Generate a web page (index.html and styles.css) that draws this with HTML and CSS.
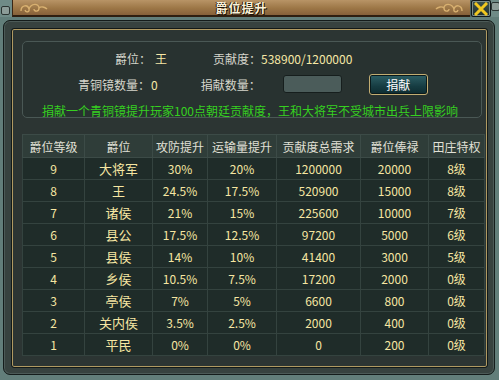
FILE: index.html
```html
<!doctype html>
<html lang="zh">
<head>
    <meta charset="UTF-8">
    <title>爵位提升</title>
    <link rel="stylesheet" href="styles.css">
</head>
<body>
<div class="window">
    <div class="titlebar">
        <div class="cap"><span class="knob"></span></div>
        <div class="wood">
            <svg class="cloud" width="30" height="14" viewBox="0 0 30 14">
                <path d="M2 10 C2 4 9 3 10 8 C11 11 7 12 6 9 M10 8 C12 2 20 2 20 7 C20 11 15 11 15 8 M20 7 C22 5 26 6 28 8" fill="none" stroke="#d8b070" stroke-width="1.4"/>
            </svg>
            <span class="title">爵位提升</span>
            <svg class="cloud" width="30" height="14" viewBox="0 0 30 14">
                <path d="M28 10 C28 4 21 3 20 8 C19 11 23 12 24 9 M20 8 C18 2 10 2 10 7 C10 11 15 11 15 8 M10 7 C8 5 4 6 2 8" fill="none" stroke="#d8b070" stroke-width="1.4"/>
            </svg>
        </div>
        <div class="close">
            <svg width="14" height="14" viewBox="0 0 14 14">
                <path d="M2 2 L12 12 M12 2 L2 12" stroke="#f0c820" stroke-width="3" stroke-linecap="square"/>
            </svg>
        </div>
        <div class="cap right"><span class="knob"></span></div>
    </div>

    <div class="frame">
        <div class="inner">
            <div class="info">
                <div class="info-row first">
                    <span class="label">爵位：</span><span class="value rank">王</span>
                    <span class="label">贡献度：</span><span class="value">538900/1200000</span>
                </div>
                <div class="info-row">
                    <span class="label">青铜镜数量：</span><span class="value mirrors">0</span>
                    <span class="label">捐献数量：</span>
                    <input class="amount" type="text">
                    <button class="donate">捐献</button>
                </div>
                <div class="notice">捐献一个青铜镜提升玩家100点朝廷贡献度，王和大将军不受城市出兵上限影响</div>
            </div>

            <table class="ranks">
                <thead>
                <tr>
                    <th class="c1">爵位等级</th>
                    <th class="c2">爵位</th>
                    <th class="c3">攻防提升</th>
                    <th class="c4">运输量提升</th>
                    <th class="c5">贡献度总需求</th>
                    <th class="c6">爵位俸禄</th>
                    <th class="c7">田庄特权</th>
                </tr>
                </thead>
                <tbody>
                <tr><td>9</td><td class="name">大将军</td><td>30%</td><td>20%</td><td>1200000</td><td>20000</td><td>8级</td></tr>
                <tr><td>8</td><td class="name">王</td><td>24.5%</td><td>17.5%</td><td>520900</td><td>15000</td><td>8级</td></tr>
                <tr><td>7</td><td class="name">诸侯</td><td>21%</td><td>15%</td><td>225600</td><td>10000</td><td>7级</td></tr>
                <tr><td>6</td><td class="name">县公</td><td>17.5%</td><td>12.5%</td><td>97200</td><td>5000</td><td>6级</td></tr>
                <tr><td>5</td><td class="name">县侯</td><td>14%</td><td>10%</td><td>41400</td><td>3000</td><td>5级</td></tr>
                <tr><td>4</td><td class="name">乡侯</td><td>10.5%</td><td>7.5%</td><td>17200</td><td>2000</td><td>0级</td></tr>
                <tr><td>3</td><td class="name">亭侯</td><td>7%</td><td>5%</td><td>6600</td><td>800</td><td>0级</td></tr>
                <tr><td>2</td><td class="name">关内侯</td><td>3.5%</td><td>2.5%</td><td>2000</td><td>400</td><td>0级</td></tr>
                <tr><td>1</td><td class="name">平民</td><td>0%</td><td>0%</td><td>0</td><td>200</td><td>0级</td></tr>
                </tbody>
            </table>
        </div>
    </div>
</div>
</body>
</html>
```

FILE: styles.css
```css
body {
    margin: 0;
    width: 499px;
    height: 380px;
    overflow: hidden;
    background-color: #627e7a;
    font-family: "Noto Sans CJK SC", "DejaVu Sans", sans-serif;
    font-size: 12px;
}

.window {
    width: 499px;
    height: 380px;
    display: flex;
    flex-direction: column;
}

/* title bar */

.titlebar {
    height: 17px;
    display: flex;
    align-items: stretch;
    background-color: #4e6460;
}

.cap {
    width: 12px;
    position: relative;
    background-color: #6f8b87;
}

.cap.right {
    width: 8px;
}

.knob {
    position: absolute;
    left: 1px;
    top: 6px;
    width: 7px;
    height: 7px;
    border-radius: 2px;
    background-color: #8c9c98;
    border: 1px solid #2a3432;
}

.cap.right .knob {
    left: 0;
    top: 2px;
}

.wood {
    flex: 1;
    display: flex;
    align-items: center;
    justify-content: space-between;
    padding: 0 6px;
    background: linear-gradient(#b89466, #9c7646 55%, #86603a);
    border-bottom: 2px solid #2e1e10;
    border-left: 1px solid #3a2614;
}

.title {
    color: #fbf2d8;
    font-weight: bold;
    letter-spacing: 1px;
    text-shadow: 1px 1px 0 #1c120a, -1px 0 0 #1c120a;
}

.close {
    width: 18px;
    margin-left: 1px;
    display: flex;
    align-items: center;
    justify-content: center;
    background: linear-gradient(#3c5450, #22302e);
    border: 1px solid #10181a;
    border-radius: 2px;
    box-shadow: inset 0 0 0 1px #7a8c88;
}

/* frame */

.frame {
    flex: 1;
    margin: 3px 4px 5px 3px;
    padding: 8px 7px 7px 8px;
    background-color: #37423f;
    border: 1px solid #141c1b;
    border-radius: 7px;
    box-shadow: inset 0 0 0 1px #4c5a57;
}

.inner {
    height: 100%;
    box-sizing: border-box;
    padding: 11px 7px 0 9px;
    background-color: #2c3533;
    border: 1px solid #b09a62;
    outline: 1px solid #121918;
    border-radius: 2px;
}

.info {
    height: 77px;
    box-sizing: border-box;
    padding-top: 5px;
    background-color: #283230;
    border: 1px solid #4a5855;
    border-radius: 5px;
    margin-right: -3px;
}

.info-row {
    display: flex;
    align-items: center;
}

.info-row.first {
    padding-left: 92px;
    height: 22px;
}

.info-row:not(.first) {
    padding-left: 55px;
    height: 30px;
}

.label {
    color: #d6d6cc;
}

.value {
    color: #f6e8a6;
}

.rank {
    margin-left: 4px;
    margin-right: 46px;
}

.mirrors {
    margin-left: 1px;
    margin-right: 43px;
}

.amount {
    width: 59px;
    height: 18px;
    box-sizing: border-box;
    margin-left: 22px;
    background-color: #4b5c5a;
    border: 1px solid #161e1d;
    border-radius: 3px;
    padding: 0;
}

.donate {
    margin-left: 27px;
    width: 59px;
    height: 21px;
    padding: 0;
    color: #ffffff;
    font-family: inherit;
    font-size: 12px;
    background: linear-gradient(#2e6066, #163c42 60%, #0e2c30);
    border: 1px solid #c2ad72;
    border-radius: 3px;
    box-shadow: inset 0 0 0 1px #0a1a1c;
}

.notice {
    color: #36d020;
    padding-left: 19px;
    margin-top: 3px;
}

/* table */

.ranks {
    width: 455px;
    margin-top: 16px;
    border-collapse: collapse;
    table-layout: fixed;
    text-align: center;
    border: 1px solid #4f5f5b;
}

.ranks th {
    height: 22px;
    padding: 0;
    font-weight: normal;
    color: #e0e0d6;
    background-color: #2f3d39;
    border: 1px solid #3c4b47;
}

.ranks td {
    height: 21px;
    padding: 0;
    color: #f6e6a2;
    background-color: #1f2c29;
    border: 1px solid #34433f;
}

.ranks td.name {
    font-size: 13px;
}

.c1 { width: 61px; }
.c2 { width: 67px; }
.c3 { width: 54px; }
.c4 { width: 68px; }
.c5 { width: 83px; }
.c6 { width: 67px; }
.c7 { width: 55px; }
```
